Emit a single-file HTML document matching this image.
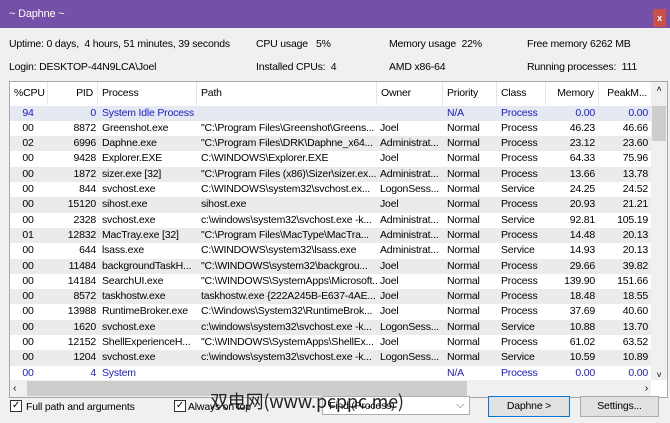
<!DOCTYPE html>
<html><head><meta charset="utf-8"><style>
*{margin:0;padding:0;box-sizing:border-box}
body{width:670px;height:423px;background:#f0f0f0;font-family:"Liberation Sans",sans-serif;font-size:10.5px;color:#000;position:relative;overflow:hidden;letter-spacing:-0.2px}
.title{position:absolute;left:0;top:0;width:670px;height:28px;background:#7450a8;color:#fff;font-size:11px;padding:8px 0 0 9px}
.close{position:absolute;right:4px;top:9px;width:13px;height:18px;background:#c9504a;color:#fff;font-size:9px;text-align:center;line-height:18px;font-weight:bold}
.t{position:absolute;white-space:nowrap}
.box{position:absolute;left:9px;top:81px;width:659px;height:317px;border:1px solid #a8a8a8;background:#fff}
.hdr{position:absolute;left:0;top:0;height:23px;width:642px;background:#fff}
.hdr div,.row div{position:absolute;top:0;white-space:nowrap;overflow:hidden}
.hdr div{line-height:23px;border-right:1px solid #e5e5e5;height:23px;padding:0 4px}
.row{position:absolute;left:0;width:642px;height:15.3px;line-height:15px}
.blue{color:#1a1acc}
.vs{position:absolute;left:641px;top:0;width:16px;height:298px;background:#f0f0f0}
.hs{position:absolute;left:0;top:298px;width:641px;height:17px;background:#f0f0f0}
.btn{position:absolute;height:21px;border:1px solid #adadad;background:#e1e1e1;text-align:center;line-height:19px}
.cb{position:absolute;width:12px;height:12px;border:1px solid #333;background:#fff;font-size:10px;line-height:10px;text-align:center}
</style></head><body>
<div class="title">~ Daphne ~<div class="close">x</div></div>
<div class="t" style="left:9px;top:38px">Uptime: 0 days,&nbsp; 4 hours, 51 minutes, 39 seconds</div>
<div class="t" style="left:256px;top:38px">CPU usage&nbsp;&nbsp; 5%</div>
<div class="t" style="left:389px;top:38px">Memory usage&nbsp; 22%</div>
<div class="t" style="left:527px;top:38px">Free memory 6262 MB</div>
<div class="t" style="left:9px;top:61px">Login: DESKTOP-44N9LCA\Joel</div>
<div class="t" style="left:256px;top:61px">Installed CPUs:&nbsp; 4</div>
<div class="t" style="left:389px;top:61px">AMD x86-64</div>
<div class="t" style="left:527px;top:61px">Running processes:&nbsp; 111</div>
<div class="box">
<div class="hdr">
<div style="left:0;width:38px;text-align:right">%CPU</div>
<div style="left:38px;width:50px;text-align:right">PID</div>
<div style="left:88px;width:99px">Process</div>
<div style="left:187px;width:180px">Path</div>
<div style="left:367px;width:66px">Owner</div>
<div style="left:433px;width:54px">Priority</div>
<div style="left:487px;width:49px">Class</div>
<div style="left:536px;width:53px;text-align:right">Memory</div>
<div style="left:589px;width:53px;text-align:right">PeakM...</div>
</div>
<div id="rows"></div>
<div class="vs"><div style="text-align:center;font-size:9px;line-height:14px">˄</div><div style="position:absolute;left:1px;top:24px;width:14px;height:35px;background:#cdcdcd"></div><div style="position:absolute;bottom:0;width:16px;text-align:center;font-size:9px">˅</div></div>
<div class="hs"><div style="position:absolute;left:3px;top:2px">‹</div><div style="position:absolute;left:17px;top:1px;width:440px;height:15px;background:#cdcdcd"></div><div style="position:absolute;right:3px;top:2px">›</div></div>
</div>
<div class="cb" style="left:10px;top:400px">✓</div>
<div class="t" style="left:26px;top:401px">Full path and arguments</div>
<div class="cb" style="left:174px;top:400px">✓</div>
<div class="t" style="left:188px;top:401px">Always on top</div>
<div style="position:absolute;left:322px;top:396px;width:148px;height:19px;border:1px solid #adadad;background:#fff"><span style="position:absolute;left:6px;top:3px">Find (Process)</span><span style="position:absolute;right:5px;top:2px;color:#666">⌵</span></div>
<div class="t" style="left:210px;top:388px;font-family:'Noto Sans CJK SC',sans-serif;font-size:18px;color:#222">双电网(www.pcppc.me)</div>
<div class="btn" style="left:488px;top:396px;width:82px;border:1px solid #0078d7">Daphne &gt;</div>
<div class="btn" style="left:580px;top:396px;width:79px">Settings...</div>
<script>
var d=[["94","0","System Idle Process","","","N/A","Process","0.00","0.00",1],
["00","8872","Greenshot.exe","\"C:\\Program Files\\Greenshot\\Greens...","Joel","Normal","Process","46.23","46.66"],
["02","6996","Daphne.exe","\"C:\\Program Files\\DRK\\Daphne_x64...","Administrat...","Normal","Process","23.12","23.60"],
["00","9428","Explorer.EXE","C:\\WINDOWS\\Explorer.EXE","Joel","Normal","Process","64.33","75.96"],
["00","1872","sizer.exe [32]","\"C:\\Program Files (x86)\\Sizer\\sizer.ex...","Administrat...","Normal","Process","13.66","13.78"],
["00","844","svchost.exe","C:\\WINDOWS\\system32\\svchost.ex...","LogonSess...","Normal","Service","24.25","24.52"],
["00","15120","sihost.exe","sihost.exe","Joel","Normal","Process","20.93","21.21"],
["00","2328","svchost.exe","c:\\windows\\system32\\svchost.exe -k...","Administrat...","Normal","Service","92.81","105.19"],
["01","12832","MacTray.exe [32]","\"C:\\Program Files\\MacType\\MacTra...","Administrat...","Normal","Process","14.48","20.13"],
["00","644","lsass.exe","C:\\WINDOWS\\system32\\lsass.exe","Administrat...","Normal","Service","14.93","20.13"],
["00","11484","backgroundTaskH...","\"C:\\WINDOWS\\system32\\backgrou...","Joel","Normal","Process","29.66","39.82"],
["00","14184","SearchUI.exe","\"C:\\WINDOWS\\SystemApps\\Microsoft...","Joel","Normal","Process","139.90","151.66"],
["00","8572","taskhostw.exe","taskhostw.exe {222A245B-E637-4AE...","Joel","Normal","Process","18.48","18.55"],
["00","13988","RuntimeBroker.exe","C:\\Windows\\System32\\RuntimeBrok...","Joel","Normal","Process","37.69","40.60"],
["00","1620","svchost.exe","c:\\windows\\system32\\svchost.exe -k...","LogonSess...","Normal","Service","10.88","13.70"],
["00","12152","ShellExperienceH...","\"C:\\WINDOWS\\SystemApps\\ShellEx...","Joel","Normal","Process","61.02","63.52"],
["00","1204","svchost.exe","c:\\windows\\system32\\svchost.exe -k...","LogonSess...","Normal","Service","10.59","10.89"],
["00","4","System","","","N/A","Process","0.00","0.00",1]];
var cols=[[0,36,'c'],[38,48,'r'],[92,95,'l'],[191,176,'l'],[370,63,'l'],[437,50,'l'],[491,45,'l'],[536,49,'r'],[589,49,'r']];
var h='';
d.forEach(function(r,i){var bg=i==0?'#e4e9f2':(i%2?'#fff':'#ebebeb');
h+='<div class="row'+(r[9]?' blue':'')+'" style="top:'+(23.5+i*15.3)+'px;background:'+bg+'">';
cols.forEach(function(c,j){h+='<div style="left:'+c[0]+'px;width:'+c[1]+'px;text-align:'+(c[2]=='c'?'center':c[2]=='r'?'right':'left')+'">'+r[j].replace(/</g,'&lt;')+'</div>'});
h+='</div>'});
document.getElementById('rows').innerHTML=h;
</script>
</body></html>
